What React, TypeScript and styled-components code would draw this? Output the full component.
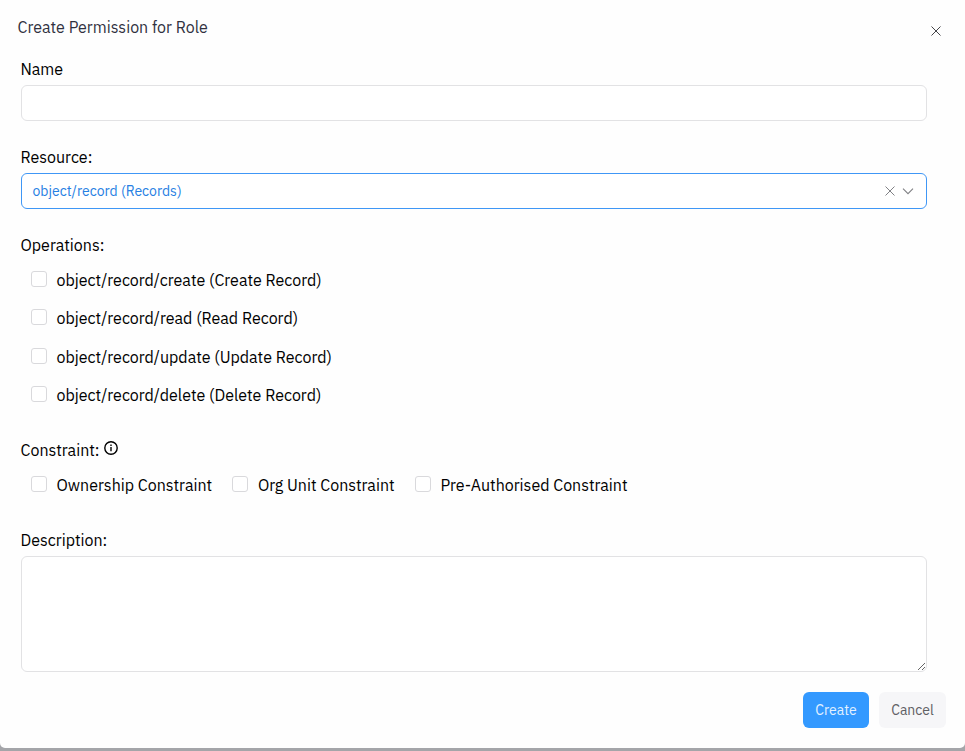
import React from "react";
import styled, { createGlobalStyle } from "styled-components";

const Global = createGlobalStyle`
  *, *::before, *::after { box-sizing: border-box; }
  body { margin: 0; background: #a4a5a9; font-family: "IBM Plex Sans", Roboto, sans-serif; color: #000; }
`;

const Backdrop = styled.div`
  height: 751px;
  overflow: hidden;
  background: #a4a5a9;
`;

const Dialog = styled.form`
  display: flex;
  flex-direction: column;
  height: 748px;
  background: #fefefe;
  border-radius: 0 0 5px 5px;
`;

const Header = styled.header`
  display: flex;
  justify-content: space-between;
  height: 59px;
  padding: 17px 24px 0 17.5px;
`;

const Title = styled.h1`
  margin: 0;
  font-size: 16px;
  line-height: 20px;
  font-weight: 400;
  color: #30313f;
`;

const IconButton = styled.button`
  display: block;
  align-self: flex-start;
  margin-top: 9px;
  padding: 0;
  border: 0;
  background: none;
  color: #454549;
  line-height: 0;
`;

const Body = styled.div`
  display: flex;
  flex-direction: column;
  padding: 0 38px 0 21px;
`;

const Field = styled.section<{ $height: number }>`
  height: ${(p) => p.$height}px;
`;

const Label = styled.label`
  display: flex;
  align-items: center;
  gap: 4.4px;
  height: 20px;
  margin: 0 0 6px -0.5px;
  font-size: 16px;
  line-height: 20px;
`;

const InfoIcon = styled.svg`
  display: block;
  margin-bottom: 4px;
`;

const Input = styled.input`
  display: block;
  width: 100%;
  height: 36px;
  padding: 0 11px;
  border: 1px solid #e2e2e4;
  border-radius: 6px;
  background: #fff;
  font: inherit;
  outline: 0;
`;

const Select = styled.div`
  display: flex;
  align-items: center;
  height: 36px;
  padding: 0 11px 0 10.5px;
  border: 1px solid #3f97f6;
  border-radius: 6px;
  background: #fff;
  font-size: 14px;
  color: #2780e3;
  svg { display: block; }
`;

const SelectValue = styled.div`
  flex: 1;
`;

const SelectIcons = styled.div`
  display: flex;
  align-items: center;
  gap: 6px;
  color: #808185;
`;

const Options = styled.div<{ $row?: boolean }>`
  display: flex;
  flex-direction: ${(p) => (p.$row ? "row" : "column")};
  gap: ${(p) => (p.$row ? "20.25px" : "18.4px")};
  padding: 9px 0 0 10px;
`;

const Option = styled.label`
  display: flex;
  align-items: flex-start;
  gap: 9.5px;
  height: 20px;
  font-size: 16px;
  line-height: 20px;
  white-space: nowrap;
`;

const Checkbox = styled.input`
  appearance: none;
  flex: none;
  width: 16px;
  height: 16px;
  margin: 1px 0 0;
  border: 1px solid #d9d9dc;
  border-radius: 3px;
  background: #fff;
`;

const TextArea = styled.textarea`
  display: block;
  width: 100%;
  height: 116px;
  padding: 8px 11px;
  border: 1px solid #e2e2e4;
  border-radius: 6px;
  background: #fff;
  font: inherit;
  resize: vertical;
  outline: 0;
`;

const Footer = styled.footer`
  display: flex;
  justify-content: flex-end;
  gap: 10px;
  padding: 20px 19px 0 0;
`;

const Button = styled.button<{ $primary?: boolean }>`
  width: ${(p) => (p.$primary ? 66 : 67)}px;
  height: 36px;
  padding: 0;
  border: 0;
  border-radius: 6px;
  background: ${(p) => (p.$primary ? "#3399ff" : "#f6f6f8")};
  color: ${(p) => (p.$primary ? "#e3f1ff" : "#606064")};
  font: inherit;
  font-size: 14px;
`;

const Cross = () => (
  <svg width="10" height="10" viewBox="0 0 10 10" fill="none" stroke="currentColor">
    <path d="M.5.5l9 9m0-9l-9 9" />
  </svg>
);

const Chevron = () => (
  <svg width="14" height="10" viewBox="0 0 14 10" fill="none" stroke="currentColor" strokeWidth="1.1">
    <path d="M2 2.7l5 5 5-5" />
  </svg>
);

const Info = () => (
  <InfoIcon width="14" height="14" viewBox="0 0 14 14" fill="none" stroke="currentColor">
    <circle cx="7" cy="7" r="6.2" strokeWidth="1.4" />
    <path d="M7 6.1V10.3" strokeWidth="1.4" />
    <path d="M7 3.6V5" strokeWidth="1.4" />
  </InfoIcon>
);

const operations = [
  "object/record/create (Create Record)",
  "object/record/read (Read Record)",
  "object/record/update (Update Record)",
  "object/record/delete (Delete Record)",
];

const constraints = ["Ownership Constraint", "Org Unit Constraint", "Pre-Authorised Constraint"];

const CheckOption = ({ text }: { text: string }) => (
  <Option>
    <Checkbox type="checkbox" />
    <span>{text}</span>
  </Option>
);

export default function App() {
  return (
    <Backdrop>
      <Global />
      <Dialog>
        <Header>
          <Title>Create Permission for Role</Title>
          <IconButton type="button" aria-label="Close"><Cross /></IconButton>
        </Header>
        <Body>
          <Field $height={88}>
            <Label htmlFor="name">Name</Label>
            <Input id="name" />
          </Field>
          <Field $height={88}>
            <Label>Resource:</Label>
            <Select>
              <SelectValue>object/record (Records)</SelectValue>
              <SelectIcons><Cross /><Chevron /></SelectIcons>
            </Select>
          </Field>
          <Field $height={205}>
            <Label>Operations:</Label>
            <Options>{operations.map((o) => <CheckOption key={o} text={o} />)}</Options>
          </Field>
          <Field $height={90}>
            <Label>Constraint:<Info /></Label>
            <Options $row>{constraints.map((o) => <CheckOption key={o} text={o} />)}</Options>
          </Field>
          <Field $height={142}>
            <Label htmlFor="description">Description:</Label>
            <TextArea id="description" />
          </Field>
        </Body>
        <Footer>
          <Button type="button" $primary>Create</Button>
          <Button type="button">Cancel</Button>
        </Footer>
      </Dialog>
    </Backdrop>
  );
}
